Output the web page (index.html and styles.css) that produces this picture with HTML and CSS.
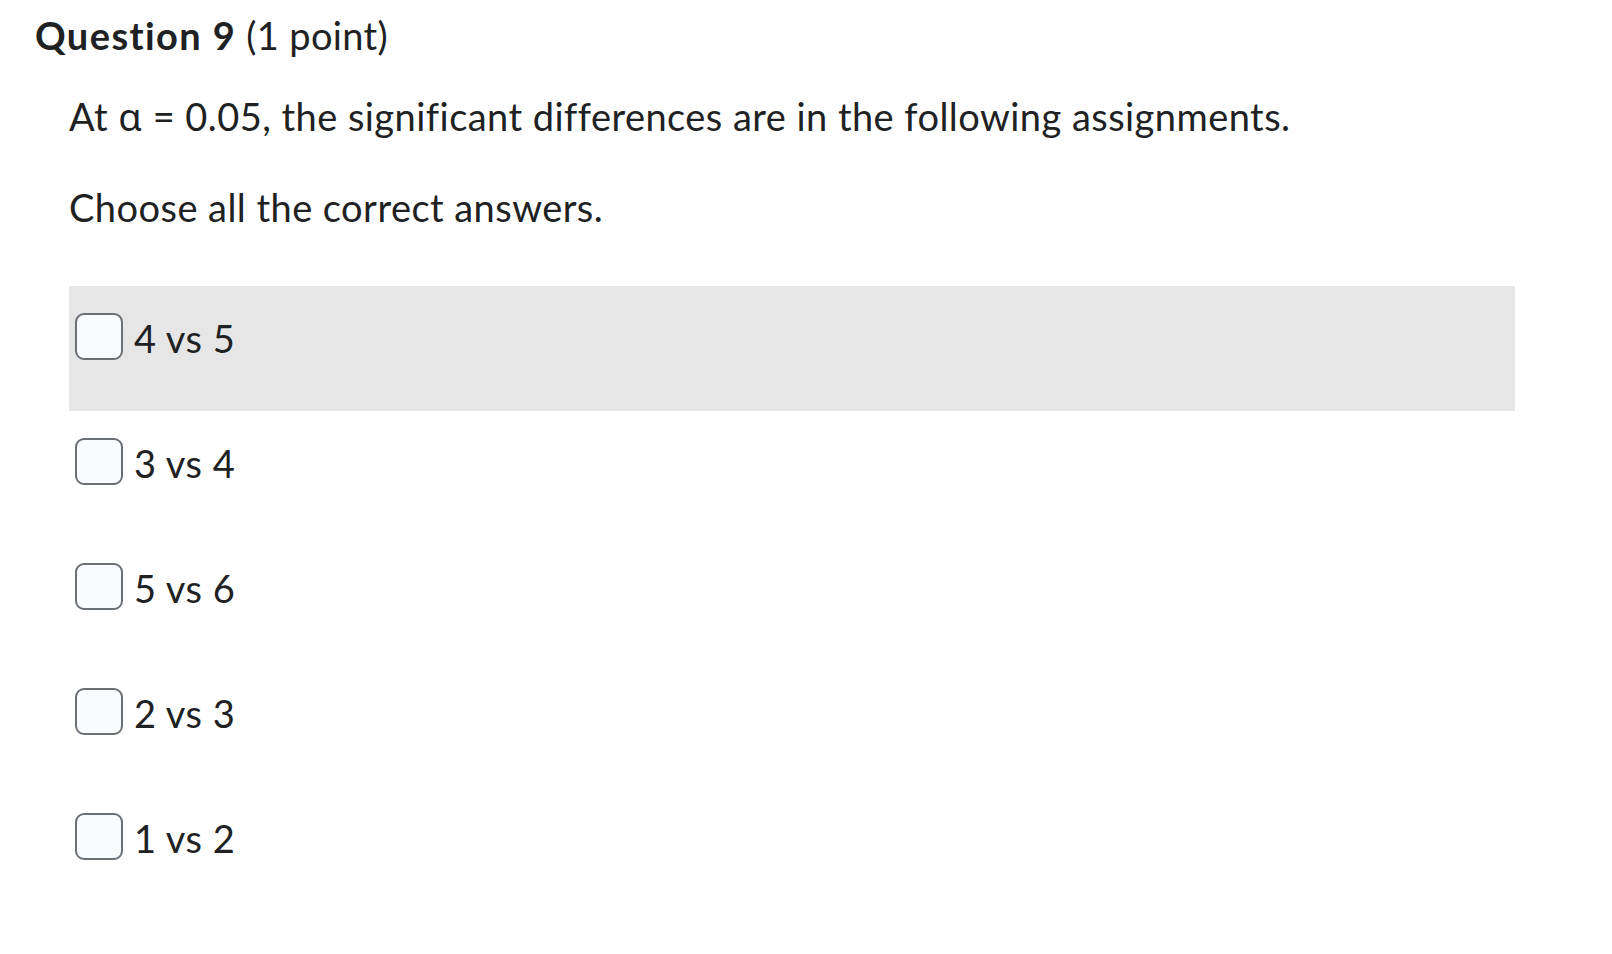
FILE: index.html
```html
<!DOCTYPE html>
<html lang="en">
<head>
<meta charset="utf-8">
<title>Question 9</title>
<link rel="stylesheet" href="styles.css">
</head>
<body>
<div class="question">
  <h2 class="q-title"><strong>Question 9</strong> <span class="q-points">(1 point)</span></h2>
  <div class="q-body">
    <p class="q-text">At <span class="greek">α</span> = 0.05, the significant differences are in the following assignments.</p>
    <p class="q-text q-instr">Choose all the correct answers.</p>
    <div class="options">
      <label class="option option-hover"><span class="box"></span><span class="opt-text">4 vs 5</span></label>
      <label class="option"><span class="box"></span><span class="opt-text">3 vs 4</span></label>
      <label class="option"><span class="box"></span><span class="opt-text">5 vs 6</span></label>
      <label class="option"><span class="box"></span><span class="opt-text">2 vs 3</span></label>
      <label class="option"><span class="box"></span><span class="opt-text">1 vs 2</span></label>
    </div>
  </div>
</div>
</body>
</html>
```

FILE: styles.css
```css
html, body {
  margin: 0;
  padding: 0;
  background: #ffffff;
}
body {
  font-family: Lato, "Noto Sans", "Liberation Sans", sans-serif;
  color: #202122;
}
.question {
  padding: 12px 97px 40px 35px;
}
.q-title {
  margin: 0;
  font-size: 38px;
  line-height: 46px;
  font-weight: 400;
  letter-spacing: 0.35px;
  color: #202122;
}
.q-title strong {
  font-weight: 700;
  letter-spacing: 1.4px;
}
.q-body {
  padding-left: 34px;
}
.q-text {
  margin: 35px 0 0 0;
  font-size: 38px;
  line-height: 46px;
  letter-spacing: 0.45px;
}
.greek {
  font-family: "Noto Sans", Lato, sans-serif;
  letter-spacing: 0.5px;
}
.q-instr {
  margin-top: 45px;
}
.options {
  margin-top: 56px;
  display: flex;
  flex-direction: column;
}
.option {
  display: flex;
  align-items: flex-start;
  gap: 11px;
  height: 125px;
  box-sizing: border-box;
  padding: 27px 6px 0 6px;
  font-size: 38px;
  letter-spacing: 0.5px;
  cursor: pointer;
}
.option-hover {
  background: #e6e6e6;
}
.box {
  flex: none;
  width: 48px;
  height: 47px;
  box-sizing: border-box;
  border: 2px solid #6b7075;
  border-radius: 9px;
  background: #f9fbff;
}
.opt-text {
  line-height: 47px;
  margin-top: 2px;
}
```
